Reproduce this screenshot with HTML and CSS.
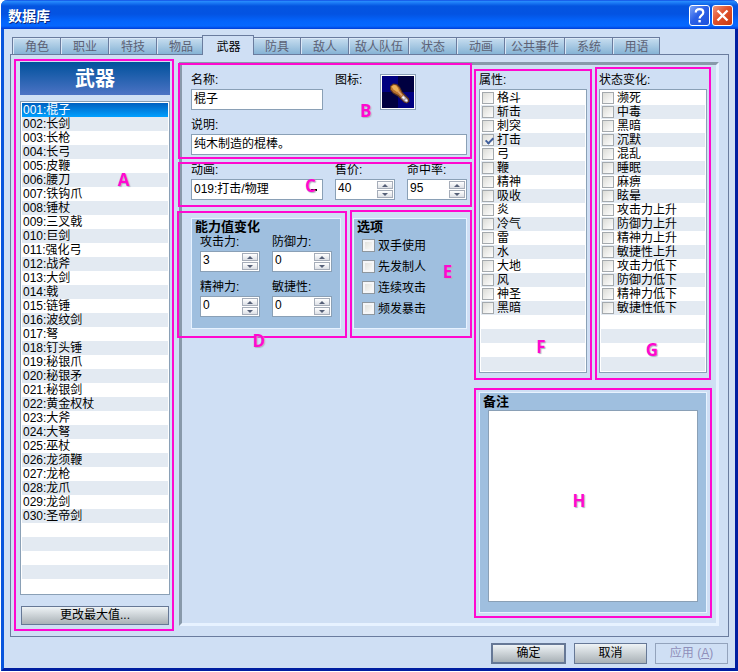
FILE: index.html
```html
<!DOCTYPE html>
<html lang="zh-CN">
<head>
<meta charset="utf-8">
<title>数据库</title>
<link rel="stylesheet" href="styles.css">
</head>
<body>
<main class="window">
  <header class="titlebar">
    <h1>数据库</h1>
    <button type="button" class="winbtn help" aria-label="帮助">
      <svg viewBox="0 0 21 21" width="21" height="21"><path d="M6.8 7.6C6.8 5.2 8.4 4.2 10.5 4.2c2.2 0 3.8 1.2 3.8 3.2 0 3-3.7 2.8-3.7 6" fill="none" stroke="#fff" stroke-width="2.2"/><rect x="9.4" y="15" width="2.4" height="2.4" fill="#fff"/></svg>
    </button>
    <button type="button" class="winbtn close" aria-label="关闭">
      <svg viewBox="0 0 21 21" width="21" height="21"><path d="M5.5 5.5l10 10M15.5 5.5l-10 10" stroke="#fff" stroke-width="2.4"/></svg>
    </button>
  </header>

  <nav class="tabs" role="tablist">
    <button type="button" role="tab">角色</button>
    <button type="button" role="tab">职业</button>
    <button type="button" role="tab">特技</button>
    <button type="button" role="tab">物品</button>
    <button type="button" role="tab" class="active" aria-selected="true">武器</button>
    <button type="button" role="tab">防具</button>
    <button type="button" role="tab">敌人</button>
    <button type="button" role="tab">敌人队伍</button>
    <button type="button" role="tab">状态</button>
    <button type="button" role="tab">动画</button>
    <button type="button" role="tab">公共事件</button>
    <button type="button" role="tab">系统</button>
    <button type="button" role="tab">用语</button>
  </nav>

  <section class="panel">
    <aside class="sidebar">
      <h2>武器</h2>
      <ul class="list items" role="listbox" aria-label="武器">
        <li role="option" class="selected" aria-selected="true">001:棍子</li>
        <li role="option">002:长剑</li>
        <li role="option">003:长枪</li>
        <li role="option">004:长弓</li>
        <li role="option">005:皮鞭</li>
        <li role="option">006:腰刀</li>
        <li role="option">007:铁钩爪</li>
        <li role="option">008:锤杖</li>
        <li role="option">009:三叉戟</li>
        <li role="option">010:巨剑</li>
        <li role="option">011:强化弓</li>
        <li role="option">012:战斧</li>
        <li role="option">013:大剑</li>
        <li role="option">014:戟</li>
        <li role="option">015:链锤</li>
        <li role="option">016:波纹剑</li>
        <li role="option">017:弩</li>
        <li role="option">018:钉头锤</li>
        <li role="option">019:秘银爪</li>
        <li role="option">020:秘银矛</li>
        <li role="option">021:秘银剑</li>
        <li role="option">022:黄金权杖</li>
        <li role="option">023:大斧</li>
        <li role="option">024:大弩</li>
        <li role="option">025:巫杖</li>
        <li role="option">026:龙须鞭</li>
        <li role="option">027:龙枪</li>
        <li role="option">028:龙爪</li>
        <li role="option">029:龙剑</li>
        <li role="option">030:圣帝剑</li>
      </ul>
      <button type="button" class="btn resize">更改最大值...</button>
      <div class="mark mark-a"><b>A</b></div>
    </aside>

    <div class="detail">
      <div class="middle">
        <section class="basics">
          <div class="row3">
            <div class="field">
              <label for="name">名称:</label>
              <input id="name" class="text" type="text" value="棍子">
            </div>
            <div class="iconfield">
              <span class="caption">图标:</span>
              <button type="button" class="iconbox" aria-label="图标">
                <svg viewBox="0 0 32 32" width="32" height="32">
                  <rect width="32" height="32" fill="#000040"/>
                  <rect width="16" height="16" fill="#000080"/>
                  <rect x="16" y="16" width="16" height="16" fill="#000080"/>
                  <path d="M8 10L11 7.5L15 8L18 11L20.500 16L27 22.500L27.500 25.500L25 27.500L22 26.500L16 20.500L11 17.500L8 14Z" fill="#5e351f"/>
                  <path d="M9 10.500L11.500 8.500L14.500 9L17 11.500L19.500 16.500L22 19.500L19.500 22L16.500 19L11.500 16.500L9 13.500Z" fill="#b9722f"/>
                  <path d="M9.500 10.500L12 9L14 9.500L16 12L17 15L15 16L11.500 13.500Z" fill="#eab057"/>
                  <path d="M15 15.500L17 15L20.500 19L19.500 20Z" fill="#dba274"/>
                  <path d="M21.500 19L26 23.500L26 25.500L24.500 26.500L22.500 25.500L19 22Z" fill="#aaa0ae"/>
                  <path d="M21 20L23 22L22 23L20 21.500ZM24 23L25.500 24.500L24.500 25.500L23 24.500Z" fill="#fff"/>
                </svg>
              </button>
            </div>
          </div>
          <div class="field">
            <label for="desc">说明:</label>
            <input id="desc" class="text" type="text" value="纯木制造的棍棒。">
          </div>
          <div class="mark mark-b"><b>B</b></div>
        </section>

        <section class="row3 numbers">
          <div class="field">
            <label for="anim">动画:</label>
            <select id="anim" class="text"><option>019:打击/物理</option></select>
          </div>
          <div class="field">
            <label for="price">售价:</label>
            <div class="spin"><input id="price" type="text" inputmode="numeric" value="40"><span><button type="button" aria-label="增加"></button><button type="button" class="down" aria-label="减少"></button></span></div>
          </div>
          <div class="field">
            <label for="hit">命中率:</label>
            <div class="spin"><input id="hit" type="text" inputmode="numeric" value="95"><span><button type="button" aria-label="增加"></button><button type="button" class="down" aria-label="减少"></button></span></div>
          </div>
          <div class="mark mark-c"><b>C</b></div>
        </section>

        <div class="groups">
          <section class="group">
            <h3>能力值变化</h3>
            <div class="stats">
              <div class="field">
                <label for="atk">攻击力:</label>
                <div class="spin"><input id="atk" type="text" inputmode="numeric" value="3"><span><button type="button" aria-label="增加"></button><button type="button" class="down" aria-label="减少"></button></span></div>
              </div>
              <div class="field">
                <label for="def">防御力:</label>
                <div class="spin"><input id="def" type="text" inputmode="numeric" value="0"><span><button type="button" aria-label="增加"></button><button type="button" class="down" aria-label="减少"></button></span></div>
              </div>
              <div class="field">
                <label for="spi">精神力:</label>
                <div class="spin"><input id="spi" type="text" inputmode="numeric" value="0"><span><button type="button" aria-label="增加"></button><button type="button" class="down" aria-label="减少"></button></span></div>
              </div>
              <div class="field">
                <label for="agi">敏捷性:</label>
                <div class="spin"><input id="agi" type="text" inputmode="numeric" value="0"><span><button type="button" aria-label="增加"></button><button type="button" class="down" aria-label="减少"></button></span></div>
              </div>
            </div>
            <div class="mark mark-d"><b>D</b></div>
          </section>
          <section class="group">
            <h3>选项</h3>
            <div class="options">
              <label><input type="checkbox">双手使用</label>
              <label><input type="checkbox">先发制人</label>
              <label><input type="checkbox">连续攻击</label>
              <label><input type="checkbox">频发暴击</label>
            </div>
            <div class="mark mark-e"><b>E</b></div>
          </section>
        </div>
      </div>

      <div class="right">
        <section class="field checks">
          <span class="caption">属性:</span>
          <ul class="list">
            <li><label><input type="checkbox">格斗</label></li>
            <li><label><input type="checkbox">斩击</label></li>
            <li><label><input type="checkbox">刺突</label></li>
            <li><label><input type="checkbox" checked>打击</label></li>
            <li><label><input type="checkbox">弓</label></li>
            <li><label><input type="checkbox">鞭</label></li>
            <li><label><input type="checkbox">精神</label></li>
            <li><label><input type="checkbox">吸收</label></li>
            <li><label><input type="checkbox">炎</label></li>
            <li><label><input type="checkbox">冷气</label></li>
            <li><label><input type="checkbox">雷</label></li>
            <li><label><input type="checkbox">水</label></li>
            <li><label><input type="checkbox">大地</label></li>
            <li><label><input type="checkbox">风</label></li>
            <li><label><input type="checkbox">神圣</label></li>
            <li><label><input type="checkbox">黑暗</label></li>
          </ul>
          <div class="mark mark-f"><b>F</b></div>
        </section>
        <section class="field checks">
          <span class="caption">状态变化:</span>
          <ul class="list">
            <li><label><input type="checkbox">濒死</label></li>
            <li><label><input type="checkbox">中毒</label></li>
            <li><label><input type="checkbox">黑暗</label></li>
            <li><label><input type="checkbox">沉默</label></li>
            <li><label><input type="checkbox">混乱</label></li>
            <li><label><input type="checkbox">睡眠</label></li>
            <li><label><input type="checkbox">麻痹</label></li>
            <li><label><input type="checkbox">眩晕</label></li>
            <li><label><input type="checkbox">攻击力上升</label></li>
            <li><label><input type="checkbox">防御力上升</label></li>
            <li><label><input type="checkbox">精神力上升</label></li>
            <li><label><input type="checkbox">敏捷性上升</label></li>
            <li><label><input type="checkbox">攻击力低下</label></li>
            <li><label><input type="checkbox">防御力低下</label></li>
            <li><label><input type="checkbox">精神力低下</label></li>
            <li><label><input type="checkbox">敏捷性低下</label></li>
          </ul>
          <div class="mark mark-g"><b>G</b></div>
        </section>
        <section class="group memo">
          <h3><label for="memo">备注</label></h3>
          <textarea id="memo"></textarea>
          <div class="mark mark-h"><b>H</b></div>
        </section>
      </div>
    </div>
  </section>

  <footer class="actions">
    <button type="button" class="btn primary">确定</button>
    <button type="button" class="btn">取消</button>
    <button type="button" class="btn" disabled>应用 (<u>A</u>)</button>
  </footer>
</main>
</body>
</html>
```
FILE: styles.css
```css
* { box-sizing: border-box; }

body {
  margin: 0;
  min-height: 100vh;
  padding: 0 0 1px 1px;
  display: flex;
  flex-direction: column;
  background: #fff;
  color: #000;
  font: 12px/14px "Liberation Sans", "Noto Sans CJK SC", sans-serif;
}

button, input, select, textarea { font: inherit; color: inherit; margin: 0; }
h1, h2, h3, ul { margin: 0; padding: 0; }
ul { list-style: none; }

.window {
  flex: 1;
  display: flex;
  flex-direction: column;
  background: #cfdff4;
  border: solid #0a3fd8;
  border-width: 0 3px 3px;
  border-left-color: #0855dd;
  border-right-color: #001ea0;
  border-bottom-color: #001ea0;
  border-radius: 6px 6px 0 0;
}

/* Title bar */
.titlebar {
  display: flex;
  align-items: center;
  gap: 2px;
  height: 29px;
  margin: 0 -3px;
  padding: 2px 5px 0 7px;
  border-radius: 6px 6px 0 0;
  background: linear-gradient(#0831d9 0, #2a8ffd 1px, #1a78f4 3px, #0455e0 6px, #0453e2 14px, #0464fb 21px, #0668ff 26px, #003dd7 29px);
}
.titlebar h1 {
  flex: 1;
  color: #fff;
  font-size: 14px;
  line-height: 20px;
  text-shadow: 1px 1px 0 #0a2a80;
}
.winbtn {
  width: 21px;
  height: 21px;
  padding: 0;
  border: 1px solid #fff;
  border-radius: 3px;
  background: linear-gradient(135deg, #7ba4f8, #2c60e6 45%, #1b50dc);
}
.winbtn svg { display: block; margin: -1px; }
.winbtn.close { background: linear-gradient(135deg, #f0957c, #e0512c 45%, #c93a10); }

/* Tabs */
.tabs {
  display: flex;
  align-items: flex-end;
  margin-top: 6px;
  padding: 0 8px;
}
.tabs button {
  min-width: 48px;
  height: 17px;
  padding: 2px 5px 0 6px;
  border: solid #6a7c9e;
  border-width: 1px 0 0 1px;
  background: linear-gradient(#c8def0, #86b3d5);
  box-shadow: inset 1px 1px #dbe8f7;
  color: #5c6175;
  line-height: 14px;
  white-space: nowrap;
}
.tabs button:last-child { border-right-width: 1px; }
.tabs button.active {
  position: relative;
  z-index: 1;
  height: 20px;
  min-width: 52px;
  margin: 0 -2px -1px;
  border-right-width: 1px;
  background: #cfdff4;
  box-shadow: none;
  color: #000;
}

/* Panel */
.panel {
  flex: 1;
  display: flex;
  gap: 9px;
  margin: 0 6px;
  padding: 7px 9px 10px;
  border: 1px solid #6a7c9e;
}
.sidebar {
  position: relative;
  flex: 0 0 150px;
  display: flex;
  flex-direction: column;
}
.sidebar h2 {
  margin-bottom: 6px;
  padding-top: 2px;
  background: linear-gradient(#00519c, #4c73c4);
  color: #fff;
  font-size: 20px;
  line-height: 31px;
  text-align: center;
}

.list {
  padding: 1px;
  border: 1px solid #8aa0b6;
  background: repeating-linear-gradient(#fff 0 14px, #e3eaf2 14px 28px) content-box, #fff;
}
.list li { height: 14px; padding-left: 2px; white-space: nowrap; }
.items { flex: 1; min-height: 494px; }
.items li { padding-left: 1px; }
.items .selected { background: linear-gradient(#0060c0, #00a0ff); color: #fff; }

.btn {
  padding: 0;
  border: 1px solid #667896;
  background: linear-gradient(#eef3f6, #a9b1b6);
  line-height: 17px;
}
.resize { margin: 11px 1px 1px; }

.detail {
  flex: 1;
  display: grid;
  grid-template-columns: 276fr 228fr;
  gap: 12px;
  padding: 8px 9px 10px;
  border: 3px solid;
  border-color: #8899aa #e7f2ff #e7f2ff #8899aa;
}

/* Fields */
.field { display: flex; flex-direction: column; min-width: 0; }
.field > label, .caption { margin-bottom: 2px; white-space: nowrap; }
.row3 {
  display: grid;
  grid-template-columns: 132fr 60fr 60fr;
  gap: 12px;
}
.basics, .numbers, .checks, .group { position: relative; }
.basics, .numbers { margin-bottom: 8px; }
.basics .row3 { margin-bottom: 8px; }
.text {
  width: 100%;
  height: 21px;
  padding: 0 2px 4px;
  border: 1px solid #8aa0b6;
  border-radius: 0;
  background: #fff;
}
select.text {
  appearance: none;
  padding: 0 2px 2px;
  background: linear-gradient(#000, #000) right 5px top 9px / 6px 2px no-repeat, #fff;
}
.iconfield { grid-column: span 2; display: flex; }
.iconfield .caption { flex: 0 0 45px; }
.iconbox {
  width: 36px;
  height: 36px;
  margin-top: 1px;
  padding: 1px;
  border: 1px solid #8aa0b6;
  background: #fff;
}
.iconbox svg { display: block; }

.spin {
  display: flex;
  height: 21px;
  padding: 1px;
  border: 1px solid #8aa0b6;
  background: #fff;
}
.spin input {
  flex: 1;
  min-width: 0;
  padding: 0 1px 3px;
  border: 0;
  background: none;
}
.spin span { flex: 0 0 16px; display: grid; gap: 1px; }
.spin button {
  display: grid;
  place-items: center;
  padding: 0;
  border: 1px solid #a6adb9;
  background: linear-gradient(#fff, #dde0e6);
}
.spin button::before {
  content: "";
  border: solid transparent;
  border-width: 0 3px 3px;
  border-bottom-color: #566078;
}
.spin .down::before { border-width: 3px 3px 0; border-top-color: #566078; }

/* Group boxes */
.groups {
  display: grid;
  grid-template-columns: 150fr 114fr;
  gap: 12px;
  margin-top: 18px;
}
.group { border: 1px solid #e7f2ff; background: #9fbfdf; }
.group h3 { padding-left: 3px; font-size: 13px; line-height: 16px; }
.stats {
  display: grid;
  grid-template-columns: 1fr 1fr;
  gap: 8px 12px;
  padding: 0 8px 11px;
}
.options { padding-left: 8px; }
.options label { display: flex; align-items: center; gap: 3px; height: 21px; }

input[type="checkbox"] {
  appearance: none;
  flex: none;
  width: 12px;
  height: 12px;
  border: 1px solid #a4a9ad;
  background: linear-gradient(135deg, #dcdcd7, #fff);
}
.options input[type="checkbox"] {
  width: 13px;
  height: 13px;
  border-color: #8e979f;
  box-shadow: inset 0 0 0 2px #f5f6f8;
}
.list label { display: flex; align-items: center; gap: 3px; height: 14px; }
.list label input { margin-left: -1px; }
input[type="checkbox"]:checked::before {
  content: "";
  display: block;
  width: 3px;
  height: 6px;
  margin: 1px 4px;
  border: solid #405f9c;
  border-width: 0 2px 2px 0;
  transform: rotate(45deg);
}

/* Right-hand columns */
.right {
  display: grid;
  grid-template-columns: 1fr 1fr;
  grid-template-rows: auto 1fr;
  gap: 19px 12px;
}
.checks .list { height: 284px; }
.memo {
  grid-column: span 2;
  display: flex;
  flex-direction: column;
  padding-top: 1px;
}
.memo textarea {
  flex: 1;
  min-height: 192px;
  margin: 0 8px 10px;
  border: 1px solid #8aa0b6;
  border-radius: 0;
  background: #fff;
  resize: none;
}

/* Footer */
.actions {
  display: flex;
  justify-content: flex-end;
  gap: 8px;
  padding: 6px 7px 4px;
}
.actions .btn { width: 73px; height: 21px; }
.actions .primary { width: 75px; border-width: 2px; }
.actions .btn:disabled { border-color: #93a3bc; background: none; color: #8f8fba; }

/* Lettered outlines over each area */
.mark {
  position: absolute;
  z-index: 2;
  border: 2px solid #ff08d0;
  pointer-events: none;
}
.mark b {
  position: absolute;
  transform: translate(-50%, -50%);
  color: #ff08d0;
  font: bold 17px/16px "Open Sans", "Noto Sans", sans-serif;
  text-shadow: 1px 1px 1px #a9b4c0;
}
.mark-a { inset: -3px -4px -5px -6px; }
.mark-b { inset: -10px -5px -4px -13px; }
.mark-c { inset: -1px -5px -7px -13px; }
.mark-d { inset: -8px -7px -10px -15px; }
.mark-e { inset: -9px -6px -10px -4px; }
.mark-f { inset: -4px -5px -7px -5px; }
.mark-g { inset: -6px -4px -7px -4px; }
.mark-h { inset: -5px -6px -6px -6px; }
.mark-a b { left: 69%; top: 21%; }
.mark-b b { left: 64%; top: 50%; }
.mark-c b { left: 45%; top: 53%; }
.mark-d b { left: 48%; top: 104%; }
.mark-e b { left: 81%; top: 48%; }
.mark-f b { left: 57%; top: 90%; }
.mark-g b { left: 49%; top: 91%; }
.mark-h b { left: 44%; top: 49%; }
```
